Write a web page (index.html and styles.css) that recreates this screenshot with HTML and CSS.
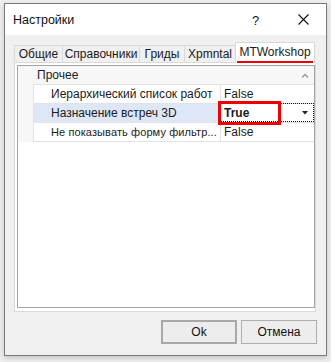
FILE: index.html
```html
<!DOCTYPE html>
<html lang="ru">
<head>
<meta charset="utf-8">
<link rel="stylesheet" href="styles.css">
</head>
<body>
<div class="window">
  <div class="titlebar">
    <span class="title">Настройки</span>
    <span class="help">?</span>
    <span class="close">
      <svg width="11" height="11" viewBox="0 0 11 11"><path d="M0.5 0.5 L10.5 10.5 M10.5 0.5 L0.5 10.5" stroke="#111" stroke-width="1.1" fill="none"/></svg>
    </span>
  </div>
  <div class="content">
    <div class="tabs">
      <div class="tab w1">Общие</div>
      <div class="tab w2">Справочники</div>
      <div class="tab w3">Гриды</div>
      <div class="tab w4">Xpmntal</div>
      <div class="tab active w5"><span class="tab-label">MTWorkshop</span></div>
    </div>
    <div class="panel">
      <div class="grid">
        <div class="cat">
          <span class="cat-label">Прочее</span>
          <svg class="chev" width="8" height="5" viewBox="0 0 8 5"><path d="M1 4.5 L4 1.5 L7 4.5" stroke="#9a9a9a" stroke-width="1.4" fill="none"/></svg>
        </div>
        <div class="row">
          <div class="gutter"></div>
          <div class="name">Иерархический список работ</div>
          <div class="value">False</div>
        </div>
        <div class="row selected">
          <div class="gutter"></div>
          <div class="name">Назначение встреч 3D</div>
          <div class="value focus">
            <span class="bold">True</span>
            <svg class="drop" width="6" height="4" viewBox="0 0 6 4"><path d="M0 0 H6 L3 3.5 Z" fill="#222"/></svg>
            <span class="mark"></span>
          </div>
        </div>
        <div class="row last">
          <div class="gutter"></div>
          <div class="name narrow">Не показывать форму фильтр...</div>
          <div class="value">False</div>
        </div>
      </div>
    </div>
    <div class="buttons">
      <div class="btn default">Ok</div>
      <div class="btn">Отмена</div>
    </div>
  </div>
</div>
</body>
</html>
```
FILE: styles.css
```css
html, body {
  margin: 0;
  padding: 0;
}
body {
  background: #eeeeee;
  padding: 3px 0 0 4px;
  font-family: "Liberation Sans", Arial, sans-serif;
  font-size: 12px;
  color: #1b1b1b;
  height: 362px;
  box-sizing: border-box;
  overflow: hidden;
}
.window {
  width: 323px;
  height: 353px;
  box-sizing: border-box;
  border: 1px solid #7b7b7b;
  background: #f0f0f0;
  display: flex;
  flex-direction: column;
  box-shadow: 0 2px 5px rgba(0, 0, 0, 0.18);
}
.titlebar {
  height: 31px;
  flex: none;
  background: #ffffff;
  display: flex;
  align-items: center;
  padding-left: 8px;
}
.title {
  font-size: 12.5px;
  color: #111;
  flex: 1;
  padding-top: 1px;
}
.help {
  width: 10px;
  font-size: 13px;
  color: #111;
  margin-right: 36px;
  padding-top: 1px;
}
.close {
  width: 11px;
  height: 11px;
  margin-right: 17px;
  display: flex;
}
.content {
  flex: 1;
  display: flex;
  flex-direction: column;
  padding: 0 0 0 9px;
}
.tabs {
  display: flex;
  align-items: flex-end;
  height: 20px;
  margin-top: 7px;
}
.tab {
  height: 17px;
  box-sizing: border-box;
  border: 1px solid #d9d9d9;
  border-bottom: none;
  border-right: none;
  background: #f0f0f0;
  display: flex;
  align-items: center;
  justify-content: center;
  white-space: nowrap;
}
.w1 { width: 48px; }
.w2 { width: 77px; }
.w3 { width: 45px; }
.w4 { width: 51px; }
.w5 { width: 80px; }
.tab.active {
  height: 21px;
  background: #ffffff;
  border-right: 1px solid #d9d9d9;
  position: relative;
  margin-bottom: -1px;
  align-items: flex-start;
  padding-top: 2px;
}
.tab-label {
  position: relative;
}
.tab.active::after {
  content: "";
  position: absolute;
  left: 1px;
  right: 1px;
  bottom: 0;
  height: 2px;
  background: #ee0000;
}
.panel {
  width: 302px;
  height: 250px;
  box-sizing: border-box;
  border: 1px solid #d9d9d9;
  background: #ffffff;
  padding: 2px 0 3px 2px;
  flex: none;
}
.grid {
  width: 298px;
  height: 243px;
  box-sizing: border-box;
  border: 1px solid #a3a3ab;
  background: #ffffff;
}
.cat {
  height: 18px;
  background: #f7f7f7;
  display: flex;
  align-items: center;
  padding-left: 19px;
}
.cat-label {
  flex: 1;
}
.chev {
  margin-right: 5px;
}
.row {
  display: flex;
  height: 19px;
}
.gutter {
  width: 15px;
  background: #f7f7f7;
  flex: none;
}
.name, .value {
  box-sizing: border-box;
  border-top: 1px solid #e2e2e2;
  border-left: 1px solid #e2e2e2;
  display: flex;
  align-items: center;
  white-space: nowrap;
  overflow: hidden;
}
.name {
  width: 187px;
  padding-left: 17px;
}
.name.narrow {
  font-size: 11px;
  letter-spacing: 0.1px;
}
.value {
  width: 94px;
  padding-left: 3px;
}
.row.last .name, .row.last .value {
  height: 20px;
  border-bottom: 1px solid #e2e2e2;
}
.row.last {
  height: 20px;
}
.row.selected .name {
  background: #dde7f7;
}
.value.focus {
  position: relative;
  overflow: visible;
  outline: 1px dotted #111;
  outline-offset: -1px;
}
.bold {
  font-weight: bold;
  flex: 1;
}
.drop {
  margin-right: 6px;
}
.mark {
  position: absolute;
  left: -3px;
  top: -3px;
  width: 63px;
  height: 24px;
  box-sizing: border-box;
  border: 3px solid #ee0000;
}
.buttons {
  display: flex;
  justify-content: flex-end;
  gap: 4px;
  padding-right: 9px;
  margin-top: 8px;
}
.btn {
  width: 76px;
  height: 24px;
  box-sizing: border-box;
  border: 1px solid #adadad;
  background: #ededed;
  display: flex;
  align-items: center;
  justify-content: center;
  color: #111;
}
.btn.default {
  border: 2px solid #a8a8a8;
}
```
